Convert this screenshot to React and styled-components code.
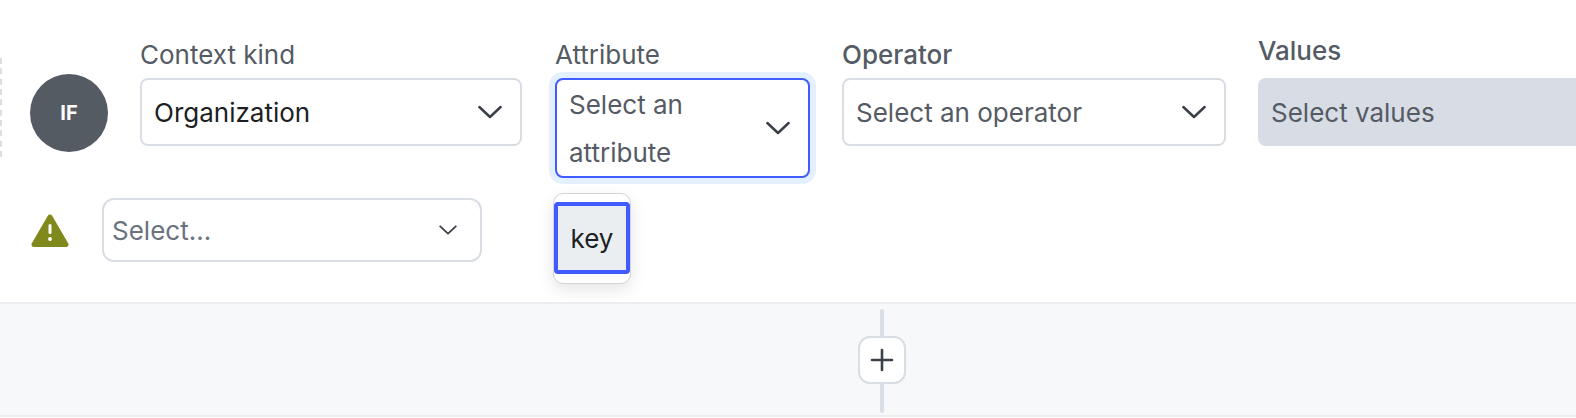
import React from 'react';
import styled, { createGlobalStyle } from 'styled-components';

const Global = createGlobalStyle`
  html, body { margin: 0; padding: 0; background: #fff; }
  body { font-family: Inter, "Liberation Sans", sans-serif; overflow: hidden; }
`;

const Page = styled.div`
  width: 1576px;
  height: 418px;
  display: flex;
  flex-direction: column;
  overflow: hidden;
`;

const Rule = styled.section`
  height: 302px;
  flex: none;
  box-sizing: border-box;
  padding-top: 40px;
  overflow: hidden;
`;

const ClauseRow = styled.div`
  display: flex;
  align-items: flex-start;
  height: 158px;
`;

const DragRail = styled.div`
  flex: none;
  width: 0;
  height: 99px;
  margin-top: 18px;
  border-left: 2px dashed #d9dee4;
`;

const Avatar = styled.div`
  flex: none;
  width: 78px;
  height: 78px;
  margin: 34px 32px 0 28px;
  border-radius: 50%;
  background: #555b63;
  color: #fff;
  font-size: 20px;
  font-weight: 700;
  display: flex;
  align-items: center;
  justify-content: center;
`;

const Field = styled.div`
  flex: none;
  position: relative;
  width: ${p => p.$width}px;
  margin-right: ${p => p.$gap || 0}px;
`;

const Label = styled.label`
  display: block;
  height: 38px;
  font-size: 26px;
  line-height: 30px;
  color: #555b65;
  font-weight: ${p => (p.$strong ? 500 : 400)};
  margin-top: ${p => (p.$raise ? -4 : 0)}px;
  margin-bottom: ${p => (p.$raise ? 4 : 0)}px;
`;

const SelectBox = styled.div`
  box-sizing: border-box;
  display: flex;
  align-items: center;
  justify-content: space-between;
  height: ${p => p.$height || 68}px;
  padding: 0 15px 0 12px;
  background: #fff;
  border: 2px solid ${p => (p.$focus ? '#405bff' : '#d9dee4')};
  border-radius: 8px;
  box-shadow: ${p => (p.$focus ? '0 0 0 6px #e4f0ff' : 'none')};
  font-size: 26px;
  line-height: 48px;
  color: ${p => (p.$filled ? '#1c1f24' : '#555b65')};
`;

const SelectText = styled.span`
  display: block;
  position: relative;
  top: 1px;
  width: ${p => (p.$narrow ? '180px' : 'auto')};
`;

const ValuesBox = styled.div`
  box-sizing: border-box;
  height: 68px;
  padding: 1px 0 0 13px;
  display: flex;
  align-items: center;
  background: #d8dce4;
  border-radius: 8px 0 0 8px;
  font-size: 26px;
  color: #555b65;
`;

const Menu = styled.div`
  position: absolute;
  left: -2px;
  top: 153px;
  width: 78px;
  height: 91px;
  box-sizing: border-box;
  padding-top: 8px;
  background: #fff;
  border: 1px solid #d4d4d4;
  border-radius: 10px;
  box-shadow: 0 6px 16px rgba(0, 0, 0, 0.1);
  z-index: 2;
`;

const MenuItem = styled.div`
  box-sizing: border-box;
  width: 76px;
  height: 72px;
  display: flex;
  align-items: center;
  justify-content: center;
  background: #ebeef1;
  border: 4px solid #405bff;
  border-radius: 4px;
  font-size: 26px;
  color: #1c1f24;
`;

const WarningRow = styled.div`
  display: flex;
  align-items: center;
  height: 64px;
  padding-left: 31px;
`;

const WarningIcon = styled.svg`
  flex: none;
  width: 38px;
  height: 36px;
  margin: 2px 33px 0 0;
`;

const SmallSelect = styled.div`
  box-sizing: border-box;
  width: 380px;
  height: 64px;
  padding: 0 21px 0 8px;
  display: flex;
  align-items: center;
  justify-content: space-between;
  border: 2px solid #d9dee4;
  border-radius: 12px;
  font-size: 26px;
  color: #6b7280;
`;

const Band = styled.section`
  position: relative;
  flex: none;
  height: 115px;
  box-sizing: border-box;
  background: #f7f8fa;
  border-top: 2px solid #ebedf0;
  border-bottom: 2px solid #ebedf0;
  display: flex;
  align-items: center;
  justify-content: center;
  padding-left: 188px;
`;

const Connector = styled.div`
  position: absolute;
  left: 880px;
  top: 5px;
  width: 4px;
  height: 104px;
  border-radius: 2px;
  background: #d9dee4;
`;

const AddButton = styled.button`
  position: relative;
  z-index: 1;
  box-sizing: border-box;
  width: 48px;
  height: 48px;
  padding: 0;
  display: flex;
  align-items: center;
  justify-content: center;
  background: #fff;
  border: 2px solid #d9dee4;
  border-radius: 12px;
`;

const Chevron = ({ size = 30 }) => (
  <svg width={size} height={size} viewBox="0 0 24 24" fill="none" stroke="#3c4149" strokeWidth="2" strokeLinecap="round" strokeLinejoin="round" style={{ flex: 'none' }}>
    <path d="M3.5 8l8.5 8 8.5-8" />
  </svg>
);

export default function App() {
  return (
    <Page>
      <Global />
      <Rule>
        <ClauseRow>
          <DragRail />
          <Avatar>IF</Avatar>
          <Field $width={382} $gap={33}>
            <Label>Context kind</Label>
            <SelectBox $filled>
              <SelectText>Organization</SelectText>
              <Chevron />
            </SelectBox>
          </Field>
          <Field $width={255} $gap={32}>
            <Label>Attribute</Label>
            <SelectBox $focus $height={100}>
              <SelectText $narrow>Select an attribute</SelectText>
              <Chevron />
            </SelectBox>
            <Menu>
              <MenuItem>key</MenuItem>
            </Menu>
          </Field>
          <Field $width={384} $gap={32}>
            <Label $strong>Operator</Label>
            <SelectBox>
              <SelectText>Select an operator</SelectText>
              <Chevron />
            </SelectBox>
          </Field>
          <Field $width={320}>
            <Label $strong $raise>Values</Label>
            <ValuesBox>Select values</ValuesBox>
          </Field>
        </ClauseRow>
        <WarningRow>
          <WarningIcon viewBox="0 0 38 36">
            <path d="M19 4 L35 31.5 L3 31.5 Z" fill="#80891c" stroke="#80891c" strokeWidth="5" strokeLinejoin="round" />
            <rect x="17.5" y="11" width="3" height="10" rx="1.5" fill="#fff" />
            <circle cx="19" cy="26" r="1.9" fill="#fff" />
          </WarningIcon>
          <SmallSelect>
            <span>Select...</span>
            <Chevron size={22} />
          </SmallSelect>
        </WarningRow>
      </Rule>
      <Band>
        <Connector />
        <AddButton aria-label="Add">
          <svg width="26" height="26" viewBox="0 0 26 26" fill="none" stroke="#3c4149" strokeWidth="2.6" strokeLinecap="round">
            <path d="M13 3v20M3 13h20" />
          </svg>
        </AddButton>
      </Band>
    </Page>
  );
}
